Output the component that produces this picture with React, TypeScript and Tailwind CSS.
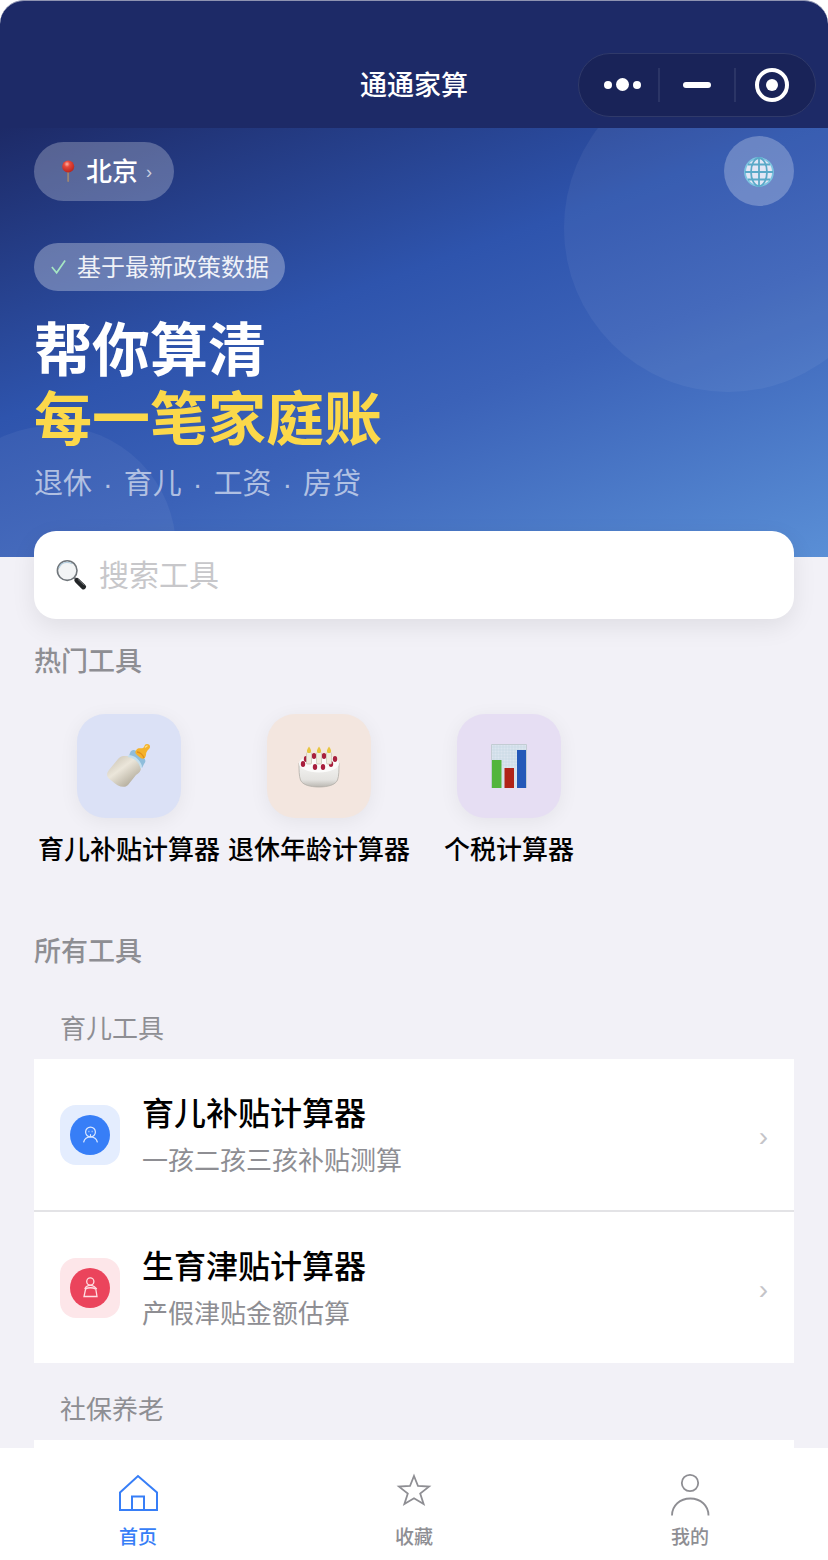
import type { ReactNode } from 'react'

interface HotTool {
  name: string
  tone: string
  icon: ReactNode
}

interface Tool {
  name: string
  desc: string
  tone: string
  icon: ReactNode
}

interface ToolGroup {
  title: string
  tools: Tool[]
}

function PinIcon() {
  return (
    <svg width="16" height="24" viewBox="0 0 16 24" aria-hidden="true">
      <defs>
        <radialGradient id="pin" cx="0.4" cy="0.3" r="0.7">
          <stop offset="0" stopColor="#ffb3a3" />
          <stop offset="0.35" stopColor="#e8483a" />
          <stop offset="1" stopColor="#b8261f" />
        </radialGradient>
      </defs>
      <rect x="7.2" y="10" width="1.9" height="12" rx="0.9" fill="#9b8474" />
      <circle cx="8.2" cy="6.5" r="6" fill="url(#pin)" />
    </svg>
  )
}

function GlobeIcon() {
  return (
    <svg width="32" height="32" viewBox="0 0 32 32" fill="none" stroke="#5aa9c8" strokeWidth="1.8" aria-hidden="true">
      <circle cx="16" cy="17" r="14" fill="#e2e6f5" stroke="#7cc4e0" />
      <ellipse cx="16" cy="17" rx="8" ry="14" />
      <path d="M16 3v28M2 17h28M5 9.5h22M5 24.5h22" />
    </svg>
  )
}

function SearchIcon() {
  return (
    <svg width="32" height="32" viewBox="0 0 32 32" fill="none" aria-hidden="true">
      <path d="M17.5 18l4 4" stroke="#77797c" strokeWidth="2.4" />
      <path d="M21 21.5l6.5 6.3" stroke="#222527" strokeWidth="5.2" strokeLinecap="round" />
      <path d="M22 20.4l6 5.6" stroke="#6b6f72" strokeWidth="1" strokeLinecap="round" />
      <circle cx="11.2" cy="11.6" r="9.8" fill="#f2f4f5" stroke="#70767b" strokeWidth="1.6" />
      <path d="M3 9c1.3-3.600 4.400-5.700 8-5.700 2 0 3.700.5 5 1.500" stroke="#b5cfdf" strokeWidth="1.2" />
    </svg>
  )
}

function BottleIcon() {
  return (
    <svg width="48" height="48" viewBox="0 0 48 48" aria-hidden="true">
      <defs>
        <linearGradient id="milk" x1="0.15" y1="0.1" x2="0.8" y2="0.9">
          <stop offset="0" stopColor="#cfc8b9" />
          <stop offset="0.4" stopColor="#ebe6da" />
          <stop offset="1" stopColor="#b0a998" />
        </linearGradient>
      </defs>
      <path d="M24 14C29 14 36 20 36 26 36 29 34 31 31 33L23 43C19 47 12 44 7 39 1 35 1 32 4 28L13 17C16 13 20 14 24 14Z" fill="url(#milk)" />
      <path d="M25 11C27 6 31 8 35 12 40 16 42 19 39 22L37 26C35 20 31 15 24 14Z" fill="#8fbddb" />
      <path d="M24 13c7 1 11 5 13 11l-1.500 3c-1-7-6-11-13-12z" fill="#c4deed" />
      <path d="M31 8.500C33 5 36 7 38 6 40 5 39 2 42 2 45 2 46 5 44 7 42 9 41 10 41 13 40 17 38 18 35 15.500 32 13 29 11 31 8.500Z" fill="#f4b22b" />
      <path d="M32 10c3 0 6 3 7 6" stroke="#e38f18" strokeWidth="1.3" fill="none" />
      <path d="M40.500 5l1.500-1" stroke="#ffe28a" strokeWidth="1.5" strokeLinecap="round" />
    </svg>
  )
}

function CakeIcon() {
  const berries = [
    [19, 14], [29, 14], [11, 17], [40, 17], [8, 22], [20, 25], [28, 25], [36, 22],
  ]
  return (
    <svg width="48" height="48" viewBox="0 0 48 48" aria-hidden="true">
      <defs>
        <linearGradient id="cream" x1="0" y1="0" x2="0" y2="1">
          <stop offset="0" stopColor="#f4f4f2" />
          <stop offset="0.7" stopColor="#e4e3e0" />
          <stop offset="1" stopColor="#bab7b1" />
        </linearGradient>
      </defs>
      <path d="M4 21c0 7 0 13 1.500 17 2 5 10 7 18.500 7s16.500-2 18.500-7C44 34 44 28 44 21z" fill="url(#cream)" stroke="#b3afa8" strokeWidth="0.8" />
      <ellipse cx="24" cy="21.500" rx="20" ry="9" fill="#fbfbfa" />
      {berries.map(([x, y]) => (
        <ellipse key={`${x}-${y}`} cx={x} cy={y} rx="2.2" ry="3" fill="#a81f3d" />
      ))}
      {[14, 24, 34].map((x) => (
        <g key={x}>
          <rect x={x - 2.5} y="10.500" width="5" height="11.500" rx="1" fill="#f0ecdf" stroke="#c9c2b2" strokeWidth="0.7" />
          <path d={`M${x} 4.500c3 4 2.500 6.500 0 6.500s-3-2.500 0-6.500z`} fill="#e8c53f" />
        </g>
      ))}
    </svg>
  )
}

function ChartIcon() {
  return (
    <svg width="48" height="48" viewBox="0 0 48 48" aria-hidden="true">
      <rect x="6" y="2" width="36" height="44" fill="#dce5ef" />
      <path
        d="M9 2v43M12 2v43M15 2v43M18 2v43M21 2v43M24 2v43M27 2v43M30 2v43M33 2v43M36 2v43M39 2v43M6 5h36M6 8h36M6 11h36M6 14h36M6 17h36M6 20h36M6 23h36"
        stroke="#c8d6e2"
        strokeWidth="0.6"
      />
      <path d="M6.500 46V2.500h35V46" stroke="#c3ccd3" fill="none" />
      <rect x="7" y="18" width="9.500" height="28" fill="#53b53c" />
      <rect x="19.500" y="26" width="9.500" height="20" fill="#b02318" />
      <rect x="32" y="8" width="9" height="38" fill="#2458b8" />
    </svg>
  )
}

function ChildIcon() {
  return (
    <svg width="40" height="40" viewBox="0 0 40 40" fill="none" stroke="#dce9ff" strokeWidth="1.2" aria-hidden="true">
      <circle cx="20" cy="20" r="20" fill="#377ef7" stroke="none" />
      <circle cx="20.500" cy="17" r="4.900" />
      <path d="M13.700 27c.8-3.300 3.500-5 6.800-5s6 1.700 6.800 5M20.500 19.500v2.500" strokeLinecap="round" />
      <path d="M18.500 16.500h.8M21.700 16.500h.8" strokeWidth="1.400" />
    </svg>
  )
}

function MotherIcon() {
  return (
    <svg width="40" height="40" viewBox="0 0 40 40" fill="none" stroke="#ffdde2" strokeWidth="1.3" aria-hidden="true">
      <circle cx="20" cy="20" r="20" fill="#eb445c" stroke="none" />
      <circle cx="20.300" cy="13.500" r="3.600" />
      <path d="M16.500 18.500c2.300-1.400 5.300-1.400 7.600 0l2.700 2.500M16.500 18.500L14.700 21M15.700 20.500L14 28.500h13l-1.300-8" />
      <path d="M15.500 21c2.500-1.700 7.500-1.700 10 0" />
    </svg>
  )
}

function HomeIcon() {
  return (
    <svg width="44" height="44" viewBox="0 0 44 44" fill="none" stroke="currentColor" strokeWidth="2" aria-hidden="true">
      <path d="M4 20.500L22 4l19 16.500V38H4z" />
      <path d="M16 37.500V24.500h12v13" />
    </svg>
  )
}

function StarIcon() {
  return (
    <svg width="44" height="44" viewBox="0 0 44 44" fill="none" stroke="currentColor" strokeWidth="1.8" aria-hidden="true">
      <path d="M22 4l4 10 11 .6-8.800 7 3.400 10.400-9.600-5.800-9.600 5.800 3.400-10.400-8.800-7 11-.6z" />
    </svg>
  )
}

function UserIcon() {
  return (
    <svg width="44" height="44" viewBox="0 0 44 44" fill="none" stroke="currentColor" strokeWidth="1.8" aria-hidden="true">
      <circle cx="22" cy="11" r="8.200" />
      <path d="M4 43.500C4 33.500 12 26.500 22.300 26.500S40.500 33.500 40.500 43.500" />
    </svg>
  )
}

const hotTools: HotTool[] = [
  { name: '育儿补贴计算器', tone: 'bg-[#dbe1f6]', icon: <BottleIcon /> },
  { name: '退休年龄计算器', tone: 'bg-[#f3e6df]', icon: <CakeIcon /> },
  { name: '个税计算器', tone: 'bg-[#e6def3]', icon: <ChartIcon /> },
]

const groups: ToolGroup[] = [
  {
    title: '育儿工具',
    tools: [
      { name: '育儿补贴计算器', desc: '一孩二孩三孩补贴测算', tone: 'bg-[#e4edfe]', icon: <ChildIcon /> },
      { name: '生育津贴计算器', desc: '产假津贴金额估算', tone: 'bg-[#fde6e9]', icon: <MotherIcon /> },
    ],
  },
  {
    title: '社保养老',
    tools: [],
  },
]

const tabs = [
  { name: '首页', icon: <HomeIcon />, active: true },
  { name: '收藏', icon: <StarIcon />, active: false },
  { name: '我的', icon: <UserIcon />, active: false },
]

function NavBar() {
  return (
    <header className="grid h-32 shrink-0 grid-cols-[1fr_auto_1fr] items-center rounded-t-3xl border-t border-[#8e93b1] bg-[#1d2a67] px-3 pt-10">
      <h1 className="col-start-2 pt-1 text-[27px] font-medium text-white">通通家算</h1>
      <div className="flex h-16 w-[238px] items-center justify-self-end rounded-full border border-[#303a6a] bg-[#192358]">
        <button aria-label="更多" className="flex h-[34px] flex-1 items-center justify-center gap-1 pl-2">
          <span className="size-2 rounded-full bg-white" />
          <span className="size-[13px] rounded-full bg-white" />
          <span className="size-2 rounded-full bg-white" />
        </button>
        <button aria-label="最小化" className="flex h-[34px] w-[78px] items-center justify-center border-x-2 border-[#2b3566]">
          <span className="h-[6px] w-7 rounded-full bg-white" />
        </button>
        <button aria-label="关闭" className="flex h-[34px] flex-1 items-center justify-center pr-2">
          <span className="flex size-[34px] items-center justify-center rounded-full border-4 border-white">
            <span className="size-3 rounded-full bg-white" />
          </span>
        </button>
      </div>
    </header>
  )
}

function Hero() {
  return (
    <section className="relative overflow-hidden bg-[linear-gradient(160deg,#1d2a67_0%,#2e54ad_40%,#3b62b8_60%,#5a8fd6_100%)] px-[34px] pt-2 pb-[53px]">
      <div className="absolute -top-16 -right-16 size-[328px] rounded-full bg-white/5" />
      <div className="absolute -bottom-[115px] -left-[70px] size-[246px] rounded-full bg-white/5" />
      <div className="relative">
        <div className="flex items-center justify-between">
          <button className="flex h-[59px] items-center rounded-full bg-white/25 pt-[2px] pr-[22px] pl-[26px] text-white">
            <PinIcon />
            <span className="ml-[10px] text-[26px] font-medium">北京</span>
            <span className="ml-2 text-lg text-white/70">›</span>
          </button>
          <button aria-label="语言" className="flex size-[70px] items-center justify-center rounded-full bg-white/25">
            <GlobeIcon />
          </button>
        </div>
        <div className="mt-[37px] flex h-12 w-fit items-center gap-[10px] rounded-full bg-white/30 px-4 pt-[2px] text-2xl text-white/90">
          <svg width="17" height="18" viewBox="0 0 18 18" fill="none" stroke="#a5e6c3" strokeWidth="1.8" aria-hidden="true">
            <path d="M2 8l5 6L16 1" />
          </svg>
          基于最新政策数据
        </div>
        <h2 className="mt-[25px] text-[58px] leading-[69px] font-bold text-white">
          帮你算清
          <br />
          <span className="text-[#fbd84a]">每一笔家庭账</span>
        </h2>
        <p className="mt-[10px] flex gap-[11px] text-[29px] leading-10 text-white/60">
          <span>退休</span>
          <span>·</span>
          <span>育儿</span>
          <span>·</span>
          <span>工资</span>
          <span>·</span>
          <span>房贷</span>
        </p>
      </div>
    </section>
  )
}

function ToolRow({ tool }: { tool: Tool }) {
  return (
    <li>
      <a href="#" className="flex h-[151px] items-center px-[26px]">
        <span className={`flex size-[60px] items-center justify-center rounded-2xl ${tool.tone}`}>{tool.icon}</span>
        <span className="ml-[22px] flex-1 pt-1">
          <span className="block text-[32px] leading-[44px] font-medium text-black">{tool.name}</span>
          <span className="mt-1 block text-[26px] leading-[42px] text-[#8e8e93]">{tool.desc}</span>
        </span>
        <span className="pt-1 text-[28px] text-[#c4c4c8]">›</span>
      </a>
    </li>
  )
}

export default function App() {
  return (
    <div className="flex h-screen flex-col bg-white font-['Liberation_Sans','Noto_Sans_CJK_SC',sans-serif]">
      <NavBar />
      <main className="min-h-0 flex-1 overflow-y-auto bg-[#f2f1f7] [scrollbar-width:none]">
        <Hero />
        <div className="px-[34px]">
          <label className="relative -mt-[26px] flex h-[88px] items-center gap-[11px] rounded-[22px] bg-white px-[22px] shadow-[0_8px_24px_rgba(0,0,0,0.08)]">
            <SearchIcon />
            <input
              type="text"
              aria-label="搜索工具"
              placeholder="搜索工具"
              className="min-w-0 flex-1 text-[30px] outline-none placeholder:text-[#c7c7ca]"
            />
          </label>

          <h2 className="mt-[23px] text-[27px] leading-10 font-medium text-[#8e8e93]">热门工具</h2>
          <div className="mt-8 grid grid-cols-4">
            {hotTools.map((tool) => (
              <a key={tool.name} href="#" className="flex flex-col items-center gap-[14px]">
                <span
                  className={`flex size-[104px] items-center justify-center rounded-[28px] shadow-[0_4px_20px_rgba(0,0,0,0.06)] ${tool.tone}`}
                >
                  {tool.icon}
                </span>
                <span className="text-[26px] leading-9 font-medium whitespace-nowrap text-black">{tool.name}</span>
              </a>
            ))}
          </div>

          <h2 className="mt-16 text-[27px] leading-10 font-medium text-[#8e8e93]">所有工具</h2>
          <div className="mt-[37px] flex flex-col gap-[26px]">
            {groups.map((group) => (
              <section key={group.title}>
                <h3 className="px-[26px] text-[26px] leading-10 text-[#8e8e93]">{group.title}</h3>
                <ul className="mt-[10px] mb-px min-h-[151px] divide-y-2 divide-[#e3e3e6] bg-white">
                  {group.tools.map((tool) => (
                    <ToolRow key={tool.name} tool={tool} />
                  ))}
                </ul>
              </section>
            ))}
          </div>
        </div>
      </main>
      <nav className="grid h-28 shrink-0 grid-cols-3 bg-white pt-6">
        {tabs.map((tab) => (
          <a
            key={tab.name}
            href="#"
            className={`flex flex-col items-center gap-2 ${tab.active ? 'text-[#377ef7]' : 'text-[#8e8e93]'}`}
          >
            {tab.icon}
            <span className="text-[19px] leading-7 font-medium">{tab.name}</span>
          </a>
        ))}
      </nav>
    </div>
  )
}
